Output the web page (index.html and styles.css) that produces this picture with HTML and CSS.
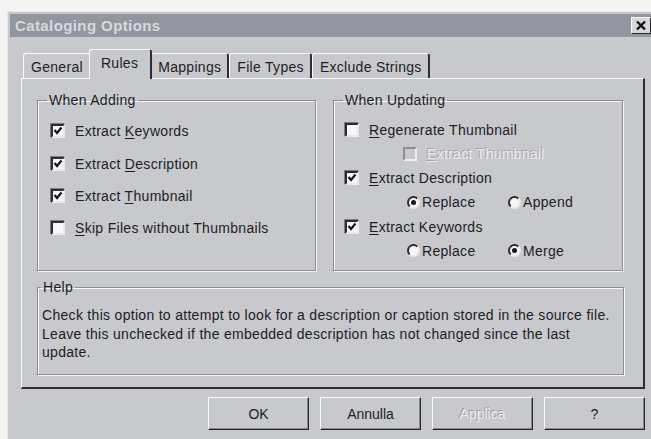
FILE: index.html
```html
<!DOCTYPE html>
<html>
<head>
<meta charset="utf-8">
<title>Cataloging Options</title>
<link rel="stylesheet" href="styles.css">
</head>
<body>
<div class="window">
  <div class="titlebar">
    <span class="title">Cataloging Options</span>
    <span class="close">
      <svg width="12" height="11" viewBox="0 0 12 11"><path d="M2 1.5 L10 9.5 M10 1.5 L2 9.5" stroke="#111" stroke-width="2.4" fill="none"/></svg>
    </span>
  </div>
  <div class="client">
    <div class="tabs">
      <div class="tab">General</div>
      <div class="tab active">Rules</div>
      <div class="tab">Mappings</div>
      <div class="tab">File Types</div>
      <div class="tab">Exclude Strings</div>
    </div>
    <div class="panel">
      <div class="groups">
        <fieldset class="group adding">
          <legend>When Adding</legend>
          <div class="opt"><span class="cb on"></span><span>Extract <u>K</u>eywords</span></div>
          <div class="opt"><span class="cb on"></span><span>Extract <u>D</u>escription</span></div>
          <div class="opt"><span class="cb on"></span><span>Extract <u>T</u>humbnail</span></div>
          <div class="opt"><span class="cb"></span><span><u>S</u>kip Files without Thumbnails</span></div>
        </fieldset>
        <fieldset class="group updating">
          <legend>When Updating</legend>
          <div class="opt"><span class="cb"></span><span><u>R</u>egenerate Thumbnail</span></div>
          <div class="opt sub disabled"><span class="cb off"></span><span><u>E</u>xtract Thumbnail</span></div>
          <div class="opt"><span class="cb on"></span><span><u>E</u>xtract Description</span></div>
          <div class="opt radios">
            <span class="radio-item"><span class="rb on"></span>Replace</span>
            <span class="radio-item"><span class="rb"></span>Append</span>
          </div>
          <div class="opt"><span class="cb on"></span><span><u>E</u>xtract Keywords</span></div>
          <div class="opt radios">
            <span class="radio-item"><span class="rb"></span>Replace</span>
            <span class="radio-item"><span class="rb on"></span>Merge</span>
          </div>
        </fieldset>
      </div>
      <fieldset class="group help">
        <legend>Help</legend>
        <p>Check this option to attempt to look for a description or caption stored in the source file.<br>Leave this unchecked if the embedded description has not changed since the last<br>update.</p>
      </fieldset>
    </div>
    <div class="buttons">
      <button class="btn">OK</button>
      <button class="btn">Annulla</button>
      <button class="btn" disabled>Applica</button>
      <button class="btn">?</button>
    </div>
  </div>
</div>
</body>
</html>
```
FILE: styles.css
```css
html, body {
  margin: 0;
  padding: 0;
  background: #f4f4f2;
  overflow: hidden;
}

body {
  font-family: "Liberation Sans", Arial, sans-serif;
  font-size: 14px;
  letter-spacing: 0.3px;
  color: #1d1d22;
}

.window {
  box-sizing: border-box;
  width: 649px;
  height: 440px;
  margin: 11px 0 0 7px;
  background: #c8c9cd;
  border-left: 1px solid #e6e6e8;
  border-top: 1px solid #e6e6e8;
  padding: 2px 2px 0 2px;
}

/* caption bar */
.titlebar {
  height: 23px;
  background: #93959f;
  display: flex;
  align-items: center;
  justify-content: space-between;
  padding-left: 5px;
}

.title {
  font-weight: bold;
  font-size: 15px;
  color: #d7d9e0;
  letter-spacing: 0.4px;
}

.close {
  width: 18px;
  height: 15px;
  margin-right: 3px;
  background: #d6d7da;
  border: 1px solid;
  border-color: #fbfbfb #2a2a2e #2a2a2e #fbfbfb;
  display: flex;
  align-items: center;
  justify-content: center;
}

.client {
  padding: 12px 9px 0 11px;
}

/* tab strip */
.tabs {
  display: flex;
  align-items: flex-end;
  padding-left: 2px;
}

.tab {
  box-sizing: border-box;
  height: 25px;
  padding: 1px 6px 0 7px;
  border-top: 1px solid #fbfbfb;
  border-left: 1px solid #fbfbfb;
  border-right: 2px solid #2e2e33;
  border-radius: 3px 3px 0 0;
  display: flex;
  align-items: center;
  background: #c8c9cd;
}

.tab:first-child {
  border-right-color: #c8c9cd;
}

.tab.active {
  position: relative;
  z-index: 1;
  height: 30px;
  margin: 0 -2px -1px -2px;
  padding: 0 12px 4px 11px;
}

/* tab page */
.panel {
  box-sizing: border-box;
  height: 311px;
  border-top: 1px solid #fbfbfb;
  border-left: 1px solid #fbfbfb;
  border-right: 2px solid #2e2e33;
  border-bottom: 2px solid #2e2e33;
  padding: 13px 0 0 15px;
}

.groups {
  display: flex;
  gap: 17px;
}

.group {
  box-sizing: border-box;
  margin: 0;
  border: 1px solid #8c8d93;
  box-shadow: 1px 1px 0 #f6f6f7, inset 1px 1px 0 #f6f6f7;
  padding: 0;
}

.group legend {
  padding: 0 2px;
  line-height: 16px;
}

.adding {
  width: 279px;
  height: 179px;
  padding: 7px 0 0 13px;
}

.adding legend {
  margin-left: -4px;
}

.updating {
  width: 290px;
  height: 179px;
  padding: 10px 0 0 11px;
}

.updating legend {
  margin-left: -2px;
}

.opt {
  display: flex;
  align-items: center;
  height: 24.3px;
}

.adding .opt {
  height: 32.4px;
}

.opt u {
  text-decoration-thickness: 1px;
  text-underline-offset: 2px;
}

.sub {
  padding-left: 58px;
  height: 23.5px;
}

.disabled {
  color: #ececee;
  text-shadow: -1px -1px 0 #a3a4a9;
}

/* checkbox */
.cb {
  box-sizing: border-box;
  width: 14px;
  height: 14px;
  margin-right: 10px;
  background: #f7f7f7;
  border: 2px solid;
  border-color: #2c2c30 #e9e9eb #e9e9eb #2c2c30;
  box-shadow: -1px -1px 0 #7c7d82;
  flex: none;
}

.cb.on {
  background: #f7f7f7 url("data:image/svg+xml,%3Csvg xmlns='http://www.w3.org/2000/svg' width='10' height='10'%3E%3Cpath d='M1.5 4 L4 7 L8.5 1.5' stroke='%23141416' stroke-width='2.2' fill='none'/%3E%3C/svg%3E") no-repeat center;
}

.cb.off {
  background: #c8c9cd;
  border-color: #8e8f94 #ededee #ededee #8e8f94;
  box-shadow: none;
  margin-right: 10px;
}

/* option buttons */
.radios {
  padding-left: 62px;
}

.radio-item {
  display: flex;
  align-items: center;
  width: 101px;
}

.rb {
  box-sizing: border-box;
  width: 13px;
  height: 13px;
  margin-right: 2px;
  border-radius: 50%;
  background: #f7f7f7;
  border: 2px solid;
  border-color: #2c2c30 #e9e9eb #e9e9eb #2c2c30;
  display: flex;
  align-items: center;
  justify-content: center;
  flex: none;
}

.rb.on::after {
  content: "";
  width: 5px;
  height: 5px;
  border-radius: 50%;
  background: #141416;
}

.help {
  width: 587px;
  height: 96px;
  margin-top: 8px;
  padding: 11px 0 0 4px;
}

.help legend {
  margin-left: -1px;
}

.help p {
  margin: 0;
  line-height: 18.5px;
}

/* dialog buttons */
.buttons {
  display: flex;
  justify-content: flex-end;
  gap: 11px;
  margin-top: 8px;
}

.btn {
  box-sizing: border-box;
  width: 101px;
  height: 33px;
  font: inherit;
  color: #1d1d22;
  background: #c8c9cd;
  border: 1px solid;
  border-color: #fbfbfb #26262a #26262a #fbfbfb;
  box-shadow: inset -1px -1px 0 #88898e;
  padding: 0;
}

.btn:disabled {
  color: #eeeef0;
  text-shadow: -1px -1px 0 #9c9da2;
}
```
